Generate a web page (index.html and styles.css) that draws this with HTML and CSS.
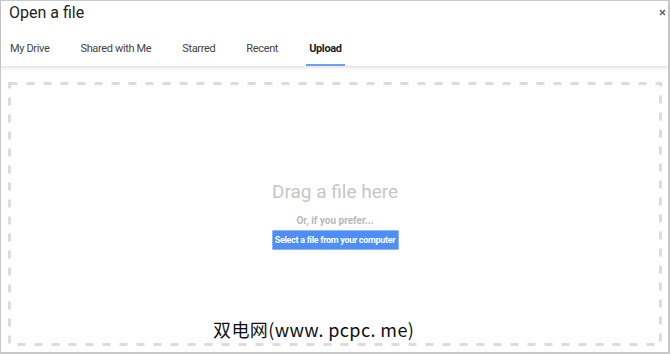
FILE: index.html
```html
<!DOCTYPE html>
<html lang="en">
<head>
    <meta charset="UTF-8">
    <title>Open a file</title>
    <link rel="stylesheet" href="styles.css">
</head>
<body>
<div class="picker">
    <header class="picker__header">
        <h1 class="picker__title">Open a file</h1>
        <button class="picker__close" aria-label="Close">
            <svg width="7" height="7" viewBox="0 0 7 7">
                <path d="M1 1L6 6M6 1L1 6" stroke="#666" stroke-width="1.6"/>
            </svg>
        </button>
        <nav class="picker__tabs">
            <span class="tab">My Drive</span>
            <span class="tab">Shared with Me</span>
            <span class="tab">Starred</span>
            <span class="tab">Recent</span>
            <span class="tab tab--active">Upload</span>
        </nav>
    </header>
    <main class="picker__body">
        <div class="dropzone">
            <svg class="dropzone__frame" width="654" height="264" viewBox="0 0 654 264">
                <rect x="1.5" y="1.5" width="651" height="261" fill="none"
                      stroke="#dcdcdc" stroke-width="3" stroke-dasharray="8 9"/>
            </svg>
            <p class="dropzone__title">Drag a file here</p>
            <p class="dropzone__hint">Or, if you prefer...</p>
            <button class="dropzone__btn">Select a file from your computer</button>
        </div>
    </main>
    <div class="watermark">双电网(www. pcpc. me)</div>
</div>
</body>
</html>
```

FILE: styles.css
```css
* {
    margin: 0;
    padding: 0;
    box-sizing: border-box;
}

body {
    background: #fff;
    font-family: Roboto, "Noto Sans", sans-serif;
}

.picker {
    position: relative;
    display: flex;
    flex-direction: column;
    width: 670px;
    height: 354px;
    border: 1px solid #c8c8c8;
    border-right-width: 2px;
    border-bottom-width: 2px;
}

.picker__header {
    position: relative;
    height: 66px;
    border-bottom: 1px solid #e6e6e6;
    box-shadow: 0 2px 3px rgba(0, 0, 0, 0.07);
}

.picker__title {
    padding: 2px 0 0 8px;
    font-size: 16px;
    font-weight: 400;
    color: #222;
    line-height: 19px;
}

.picker__close {
    position: absolute;
    top: 8px;
    right: 2px;
    border: 0;
    background: transparent;
    line-height: 0;
}

.picker__tabs {
    display: flex;
    gap: 25px;
    padding: 0 0 0 6px;
    margin-top: 9px;
}

.tab {
    padding: 11px 3px 8px;
    font-size: 11px;
    letter-spacing: -0.35px;
    line-height: 14px;
    color: #444;
    border-bottom: 2px solid transparent;
}

.tab--active {
    font-weight: 700;
    color: #222;
    border-bottom-color: #6e9ff0;
}

.picker__body {
    flex: 1;
    padding: 15px 6px 6px 7px;
}

.dropzone {
    position: relative;
    display: flex;
    flex-direction: column;
    align-items: center;
    width: 654px;
    height: 264px;
    padding-top: 99px;
}

.dropzone__frame {
    position: absolute;
    top: 0;
    left: 0;
}

.dropzone__title {
    font-size: 19px;
    line-height: 22px;
    color: #c6c6c6;
}

.dropzone__hint {
    margin-top: 12px;
    font-size: 10px;
    font-weight: 700;
    line-height: 12px;
    color: #b8b8b8;
}

.dropzone__btn {
    margin-top: 3px;
    width: 127px;
    height: 20px;
    font-family: Roboto, sans-serif;
    font-size: 9px;
    font-weight: 700;
    letter-spacing: -0.3px;
    color: #fff;
    background: #4d8ef7;
    border: 1px solid #8cb4f7;
    border-radius: 1px;
}

.watermark {
    position: absolute;
    left: 212px;
    top: 316px;
    font-family: "Noto Sans CJK SC", sans-serif;
    font-size: 18px;
    letter-spacing: 0.4px;
    line-height: 24px;
    color: #111;
}
```
